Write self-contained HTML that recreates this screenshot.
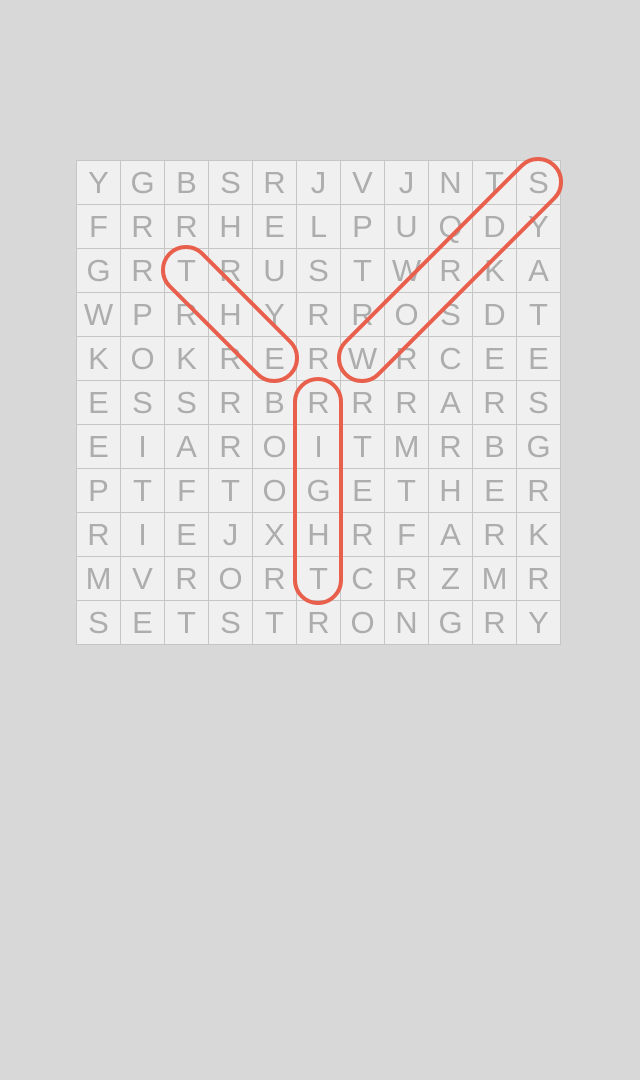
<!DOCTYPE html>
<html><head><style>
body{margin:0;background:#d8d8d8;width:640px;height:1080px;position:relative;font-family:"Liberation Sans",sans-serif;overflow:hidden}
#g{position:absolute;left:76px;top:160px;display:grid;grid-template-columns:repeat(11,44px);border-left:1px solid #c6c6c6;border-top:1px solid #c6c6c6;box-sizing:border-box}
#g div{width:44px;height:44px;box-sizing:border-box;border-right:1px solid #c6c6c6;border-bottom:1px solid #c6c6c6;background:#f0f0f0;color:#adadad;font-size:31px;line-height:44px;text-align:center}
svg{position:absolute;left:0;top:0}
</style></head><body>
<div id="g"></div>
<svg width="640" height="1080"><g fill="none" stroke="#e85f4c" stroke-width="4">
<rect x="295" y="379" width="46" height="224" rx="23"/>
<rect x="-85.25" y="-23" width="170.5" height="46" rx="23" transform="translate(230,314) rotate(45)"/>
<rect x="-147.5" y="-23" width="295" height="46" rx="23" transform="translate(450,270) rotate(-45)"/>
</g></svg>
<script>
var r=["YGBSRJVJNTS","FRRHELPUQDY","GRTRUSTWRKA","WPRHYRROSDT","KOKRERWRCEE","ESSRBRRRARS","EIAROITMRBG","PTFTOGETHER","RIEJXHRFARK","MVRORTCRZMR","SETSTRONGRY"];
var g=document.getElementById('g');r.join('').split('').forEach(function(c){var d=document.createElement('div');d.textContent=c;g.appendChild(d);});
</script>
</body></html>
